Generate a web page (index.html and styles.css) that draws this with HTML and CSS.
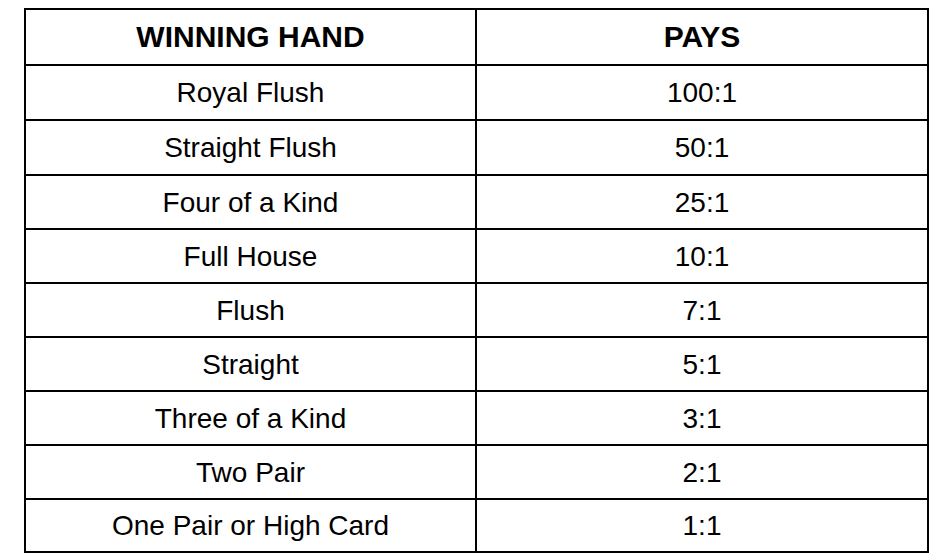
FILE: index.html
```html
<!DOCTYPE html>
<html lang="en">
<head>
<meta charset="utf-8">
<title>Pay Table</title>
<link rel="stylesheet" href="styles.css">
</head>
<body>
<div class="paytable" role="table">
  <div class="cell head" role="columnheader">WINNING HAND</div>
  <div class="cell head" role="columnheader">PAYS</div>
  <div class="cell">Royal Flush</div><div class="cell">100:1</div>
  <div class="cell">Straight Flush</div><div class="cell">50:1</div>
  <div class="cell">Four of a Kind</div><div class="cell">25:1</div>
  <div class="cell">Full House</div><div class="cell">10:1</div>
  <div class="cell">Flush</div><div class="cell">7:1</div>
  <div class="cell">Straight</div><div class="cell">5:1</div>
  <div class="cell">Three of a Kind</div><div class="cell">3:1</div>
  <div class="cell">Two Pair</div><div class="cell">2:1</div>
  <div class="cell">One Pair or High Card</div><div class="cell">1:1</div>
</div>
</body>
</html>
```
FILE: styles.css
```css
html, body {
  margin: 0;
  background: #ffffff;
}
body {
  padding: 8px 0 0 24px;
  font-family: "Liberation Sans", Arial, sans-serif;
  color: #000000;
}
.paytable {
  display: grid;
  width: 901px;
  grid-template-columns: 449px 450px;
  grid-template-rows: 54px 53px 53px repeat(6, 52px) 51px;
  gap: 2px;
  padding: 2px;
  background: #000000;
}
.cell {
  background: #ffffff;
  display: flex;
  align-items: center;
  justify-content: center;
  font-size: 28px;
  line-height: 1;
  padding-top: 1px;
  box-sizing: border-box;
}
.head {
  font-weight: bold;
  font-size: 30px;
  padding-top: 0;
}
```
